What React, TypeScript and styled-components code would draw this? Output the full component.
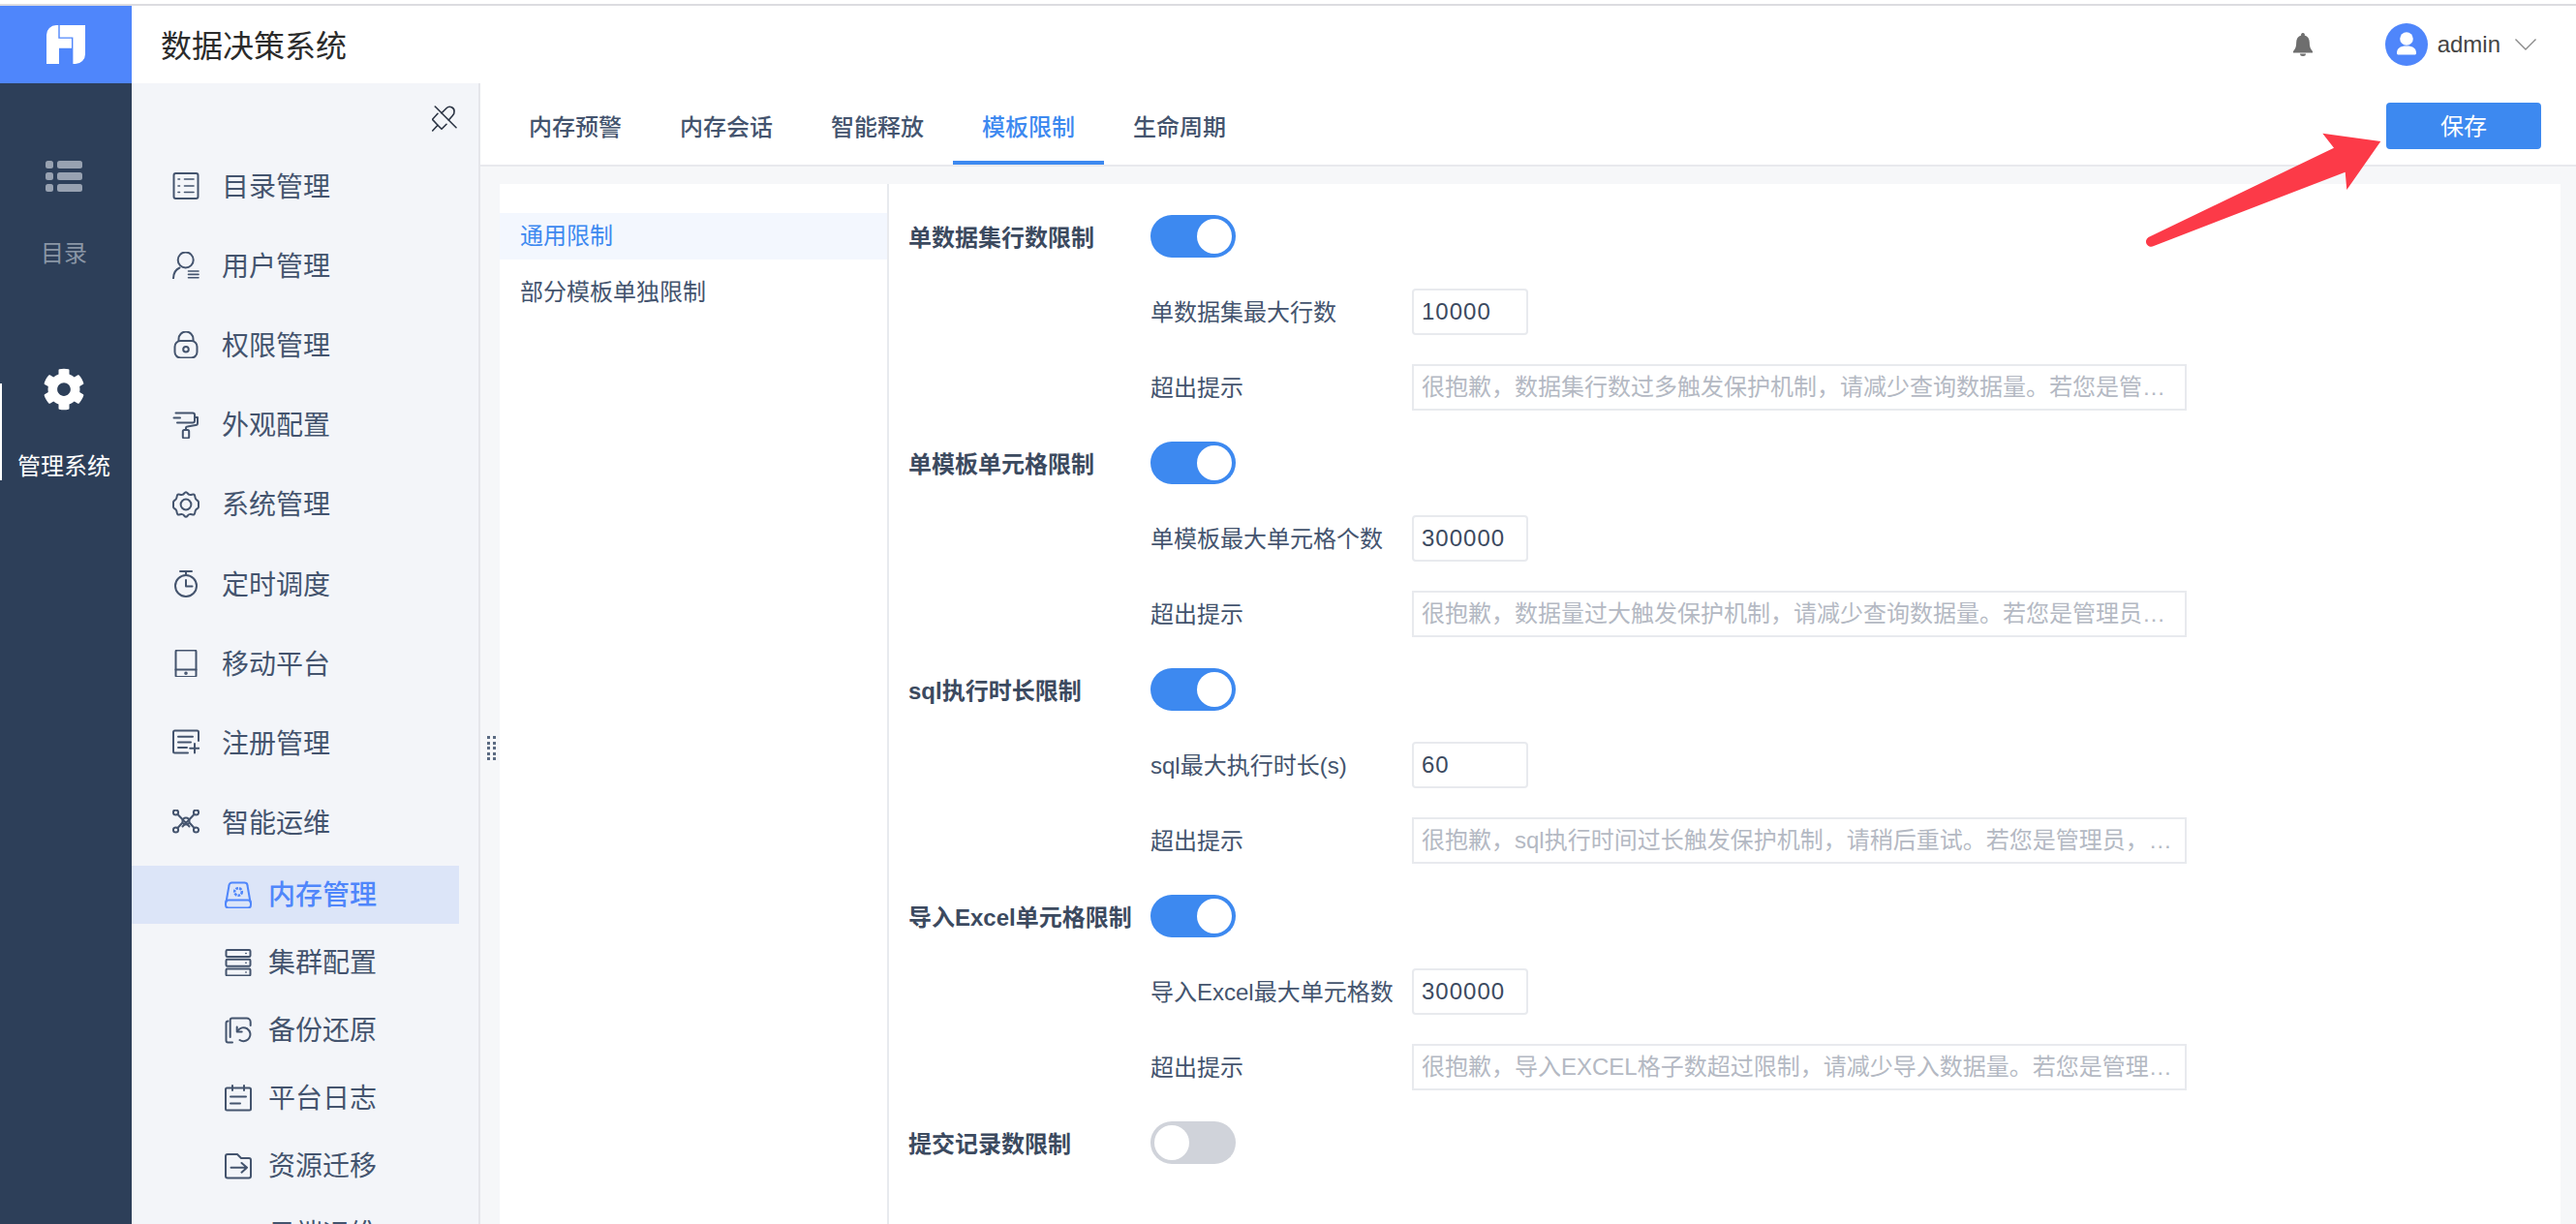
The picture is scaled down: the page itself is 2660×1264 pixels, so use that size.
import React from 'react';
import styled, { createGlobalStyle } from 'styled-components';
import { FaCog } from 'react-icons/fa';

const INK = '#44546e';
const BLUE = '#3d89f0';
const BRAND = '#4f86fb';

const GlobalStyle = createGlobalStyle`
  html, body {
    margin: 0;
    padding: 0;
    background: #fff;
  }
  body {
    font-family: "Liberation Sans", "Noto Sans CJK SC", sans-serif;
    font-size: 24px;
    overflow: hidden;
  }
  * {
    box-sizing: border-box;
  }
`;

const iconProps = {
  width: 28,
  height: 28,
  viewBox: '0 0 28 28',
  fill: 'none',
  stroke: 'currentColor',
  strokeWidth: 2,
  strokeLinecap: 'round' as const,
  strokeLinejoin: 'round' as const,
};

const CatalogIcon = () => (
  <svg {...iconProps}>
    <rect x="1.500" y="1" width="25" height="26" rx="2" />
    <path strokeWidth="1.600" d="M6 7h1.500M12.500 7H22M6 14h1.500M12.500 14H22M6 20.500h1.500M12.500 20.500H22" />
  </svg>
);

const UserIcon = () => (
  <svg {...iconProps}>
    <circle cx="13.700" cy="8.500" r="8" />
    <path d="M1 27.500c0-5 2.200-9 6.500-11" />
    <path strokeWidth="1.600" d="M16.500 20H27M16.500 23.400H27M16.500 26.800H27" />
  </svg>
);

const LockIcon = () => (
  <svg {...iconProps}>
    <path d="M6.500 10V8a7.500 7.500 0 0 1 15 0v2" />
    <rect x="2.500" y="10" width="23" height="17.500" rx="6" />
    <circle cx="14" cy="18.700" r="2.800" />
  </svg>
);

const RollerIcon = () => (
  <svg {...iconProps}>
    <path d="M3.500 1.500H21a2 2 0 0 1 2 2v6a2 2 0 0 1-2 2H5" />
    <path d="M1.500 6.500H8" />
    <path d="M23.500 6h2.500v6a2 2 0 0 1-2 2L15.500 15.500a1.500 1.500 0 0 0-1.500 1.500v2" />
    <rect x="10.800" y="19" width="6.400" height="8.500" rx="1.500" />
  </svg>
);

const GearLineIcon = () => (
  <svg {...iconProps}>
    <path d="M14 1.300c1.500 0 2 2.200 3.700 2.600 1.800.5 3.500-1 4.700-.2 1.200.8.700 3 1.700 4.500 1 1.500 2.900 1.700 2.900 3.400v4.800c0 1.700-1.900 1.900-2.900 3.400-1 1.500-.5 3.700-1.700 4.500-1.200.8-2.900-.7-4.700-.2-1.700.4-2.200 2.600-3.700 2.600s-2-2.200-3.700-2.600c-1.800-.5-3.500 1-4.700.2-1.200-.8-.7-3-1.700-4.500-1-1.500-2.900-1.700-2.900-3.400v-4.800c0-1.700 1.900-1.900 2.900-3.400 1-1.500.5-3.700 1.700-4.500 1.200-.8 2.900.7 4.700.2C12 3.500 12.500 1.300 14 1.300z" />
    <circle cx="14" cy="14" r="5.400" />
  </svg>
);

const TimerIcon = () => (
  <svg {...iconProps}>
    <path d="M8 1h12M14 1v4" />
    <circle cx="14" cy="16" r="11" />
    <path d="M14 10v6.500h6.500" />
  </svg>
);

const TabletIcon = () => (
  <svg {...iconProps}>
    <rect x="3.500" y="0.500" width="21" height="27.500" rx="1.500" />
    <path d="M3.500 20.500h21" />
    <circle cx="14" cy="24.300" r="0.800" />
  </svg>
);

const RegisterIcon = () => (
  <svg {...iconProps}>
    <path d="M27 12V3A1.500 1.500 0 0 0 25.500 1.500H2.500A1.500 1.500 0 0 0 1 3v20A1.500 1.500 0 0 0 2.500 24.500H16" />
    <path d="M6 7.800h15M6 13.500h13M6 19h9M23 15v9.500M18.200 19.700h9.300" />
  </svg>
);

const NodesIcon = () => (
  <svg {...iconProps} viewBox="0 0 28 28">
    <circle cx="14" cy="12" r="3.600" />
    <circle cx="3.500" cy="3" r="2.600" />
    <circle cx="24.500" cy="3" r="2.600" />
    <circle cx="3.500" cy="21" r="2.600" />
    <circle cx="24.500" cy="21" r="2.600" />
    <path d="M5.500 5l12 12.500M22.500 5l-12 12.500M5.500 19l4.500-5M22.500 19l-4.500-5" />
  </svg>
);

const DiskIcon = () => (
  <svg {...iconProps}>
    <path d="M1.500 21.500l3-17a3 3 0 0 1 3-3h13a3 3 0 0 1 3 3l3 17" />
    <rect x="1" y="19.500" width="26" height="8" rx="3" />
    <circle cx="14" cy="11" r="3.800" strokeWidth="2.600" strokeDasharray="2.600 1.100" strokeLinecap="butt" />
  </svg>
);

const ServerIcon = () => (
  <svg {...iconProps}>
    <rect x="1.500" y="1" width="25" height="7" rx="1.200" />
    <rect x="1.500" y="10.800" width="25" height="7" rx="1.200" />
    <rect x="1.500" y="20.500" width="25" height="7" rx="1.200" />
    <path strokeWidth="1.500" d="M21.800 4.500h.4M21.800 14.300h.4M21.800 24h.4" />
  </svg>
);

const RestoreIcon = () => (
  <svg {...iconProps}>
    <path d="M3.500 4.500a2 2 0 0 0-2 2v18a2 2 0 0 0 2 2H8" />
    <path d="M5.700 21V3.500a2 2 0 0 1 2-2h15a4 4 0 0 1 4 4V9" />
    <path d="M13.500 14.500a7 7 0 1 1 2 9.500" />
    <path d="M12.700 10.500v5h5" />
  </svg>
);

const LogIcon = () => (
  <svg {...iconProps}>
    <rect x="1" y="3.500" width="26" height="23" rx="1.500" />
    <path d="M8 1v5M20 1v5M6 12.500h16M6 19.500h10" />
  </svg>
);

const FolderIcon = () => (
  <svg {...iconProps}>
    <path d="M1 24.500V4a2 2 0 0 1 2-2h10l4 4h8a2 2 0 0 1 2 2v16.500a2 2 0 0 1-2 2H3a2 2 0 0 1-2-2z" />
    <path d="M6.500 15.700H23M17.500 11l5.500 4.700-5.500 5" />
  </svg>
);

const PinIcon = () => (
  <svg width="26" height="28" viewBox="0 0 26 28" fill="none" stroke="#2b3444" strokeWidth="1.600" strokeLinecap="round" strokeLinejoin="round">
    <path d="M3.300 2L25 23.700" />
    <path d="M10 8.700l5-5a4.700 4.700 0 0 1 8 4 4.700 4.700 0 0 1-1.500 3.500l-4.200 4.800" />
    <path d="M6 9.300L0.500 15.300l5.500 6 4 4 5-5" />
    <path d="M6 21.300l-5.300 5.700" />
  </svg>
);

const mainNav = [
  { label: '目录管理', icon: <CatalogIcon /> },
  { label: '用户管理', icon: <UserIcon /> },
  { label: '权限管理', icon: <LockIcon /> },
  { label: '外观配置', icon: <RollerIcon /> },
  { label: '系统管理', icon: <GearLineIcon /> },
  { label: '定时调度', icon: <TimerIcon /> },
  { label: '移动平台', icon: <TabletIcon /> },
  { label: '注册管理', icon: <RegisterIcon /> },
  { label: '智能运维', icon: <NodesIcon /> },
];

const subNav = [
  { label: '内存管理', icon: <DiskIcon />, active: true },
  { label: '集群配置', icon: <ServerIcon /> },
  { label: '备份还原', icon: <RestoreIcon /> },
  { label: '平台日志', icon: <LogIcon /> },
  { label: '资源迁移', icon: <FolderIcon /> },
  { label: '云端运维', icon: null },
];

const tabs = ['内存预警', '内存会话', '智能释放', '模板限制', '生命周期'];

const limits = [
  {
    title: '单数据集行数限制',
    maxLabel: '单数据集最大行数',
    max: '10000',
    hint: '很抱歉，数据集行数过多触发保护机制，请减少查询数据量。若您是管理员，请调整限制。',
  },
  {
    title: '单模板单元格限制',
    maxLabel: '单模板最大单元格个数',
    max: '300000',
    hint: '很抱歉，数据量过大触发保护机制，请减少查询数据量。若您是管理员，请调整限制。',
  },
  {
    title: 'sql执行时长限制',
    maxLabel: 'sql最大执行时长(s)',
    max: '60',
    hint: '很抱歉，sql执行时间过长触发保护机制，请稍后重试。若您是管理员，请调整限制。',
  },
  {
    title: '导入Excel单元格限制',
    maxLabel: '导入Excel最大单元格数',
    max: '300000',
    hint: '很抱歉，导入EXCEL格子数超过限制，请减少导入数据量。若您是管理员，请调整限制。',
  },
];

const App = () => (
  <Page>
    <GlobalStyle />
    <TopLine />
    <Header>
      <Logo>
        <svg width="40" height="40" viewBox="0 0 40 40" fill="#fff">
          <path d="M0 10A10 10 0 0 1 10 0h2.300v13.800H26v10H13V40H0z" />
          <path d="M13.700 0H40v30a10 10 0 0 1-10 10h-2.600V12.500H13.700z" />
        </svg>
      </Logo>
      <AppTitle>数据决策系统</AppTitle>
      <HeaderRight>
        <svg width="20" height="24" viewBox="0 0 20 24" fill="#6e6e6e">
          <path d="M10 0a1.800 1.800 0 0 1 1.800 2.400C15 3.200 16.800 6 16.800 9.500c0 4.500.8 7 3.200 9.500v1.500H0V19c2.400-2.500 3.200-5 3.200-9.500C3.200 6 5 3.200 8.200 2.400A1.800 1.800 0 0 1 10 0z" />
          <path d="M7 21.500h6a3 2.500 0 0 1-6 0z" />
        </svg>
        <UserBox>
          <Avatar>
            <svg width="44" height="44" viewBox="0 0 44 44" fill="#fff">
              <circle cx="22" cy="16" r="6.800" />
              <path d="M12 31c0-5 3-7.500 10-7.500s10 2.500 10 7.500c0 1-1 1.500-2 1.500H14c-1 0-2-.5-2-1.500z" />
            </svg>
          </Avatar>
          <UserName>admin</UserName>
          <svg width="22" height="12" viewBox="0 0 22 12" fill="none" stroke="#8a8a8a" strokeWidth="1.400">
            <path d="M.5.500 11 11 21.500.500" />
          </svg>
        </UserBox>
      </HeaderRight>
    </Header>
    <Body>
      <Rail>
        <RailItem>
          <RailIcon>
            <svg width="38" height="32" viewBox="0 0 38 32" fill="#98a2b1">
              <rect width="8" height="8" rx="2.500" />
              <rect x="12" width="26" height="8" rx="2.500" />
              <rect y="12" width="8" height="8" rx="2.500" />
              <rect x="12" y="12" width="26" height="8" rx="2.500" />
              <rect y="24" width="8" height="8" rx="2.500" />
              <rect x="12" y="24" width="26" height="8" rx="2.500" />
            </svg>
          </RailIcon>
          <RailLabel>目录</RailLabel>
        </RailItem>
        <RailItem $active>
          <RailIcon>
            <FaCog size={44} />
          </RailIcon>
          <RailLabel>管理系统</RailLabel>
        </RailItem>
      </Rail>
      <SideNav>
        <PinRow>
          <PinIcon />
        </PinRow>
        {mainNav.map((item) => (
          <NavItem key={item.label}>
            <NavIcon>{item.icon}</NavIcon>
            <NavLabel>{item.label}</NavLabel>
          </NavItem>
        ))}
        <SubList>
          {subNav.map((item) => (
            <SubItem key={item.label} $active={item.active}>
              <NavIcon>{item.icon}</NavIcon>
              <NavLabel>{item.label}</NavLabel>
            </SubItem>
          ))}
        </SubList>
      </SideNav>
      <Main>
        <TabBar>
          {tabs.map((tab) => (
            <Tab key={tab} $active={tab === '模板限制'}>
              {tab}
            </Tab>
          ))}
          <SaveButton type="button">保存</SaveButton>
          <Arrow width="248" height="124" viewBox="2214 134 248 124">
            <path
              d="M2218.500 245 2410 152.700 2398.300 137.700 2458.300 146 2423.300 196 2421.700 177.700 2224 254a4.500 4.500 0 0 1-5.500-9z"
              fill="#fc3a48"
            />
          </Arrow>
        </TabBar>
        <Content>
          <Grip>
            {Array.from({ length: 10 }, (_, i) => (
              <GripDot key={i} />
            ))}
          </Grip>
          <Panel>
            <SideMenu>
              <SideMenuItem $active>通用限制</SideMenuItem>
              <SideMenuItem>部分模板单独限制</SideMenuItem>
            </SideMenu>
            <Form>
              {limits.map((limit) => (
                <React.Fragment key={limit.title}>
                  <FormRow>
                    <SectionTitle>{limit.title}</SectionTitle>
                    <Toggle $on>
                      <Knob />
                    </Toggle>
                  </FormRow>
                  <FormRow $sub>
                    <FieldLabel>{limit.maxLabel}</FieldLabel>
                    <NumberBox>{limit.max}</NumberBox>
                  </FormRow>
                  <FormRow $sub>
                    <FieldLabel>超出提示</FieldLabel>
                    <HintBox>{limit.hint}</HintBox>
                  </FormRow>
                </React.Fragment>
              ))}
              <FormRow>
                <SectionTitle>提交记录数限制</SectionTitle>
                <Toggle>
                  <Knob />
                </Toggle>
              </FormRow>
            </Form>
          </Panel>
        </Content>
      </Main>
    </Body>
  </Page>
);

const Page = styled.div`
  display: flex;
  flex-direction: column;
  height: 1264px;
  overflow: hidden;
  background: #fff;
`;

const TopLine = styled.div`
  height: 6px;
  flex: none;
  background: #fff;
  border-bottom: 2px solid #dcdce0;
`;

const Header = styled.header`
  display: flex;
  align-items: center;
  height: 80px;
  flex: none;
  background: #fff;
`;

const Logo = styled.div`
  display: flex;
  align-items: center;
  justify-content: center;
  width: 136px;
  height: 100%;
  background: ${BRAND};
`;

const AppTitle = styled.div`
  margin-left: 30px;
  padding-bottom: 3px;
  font-size: 32px;
  color: #2b2b2b;
`;

const HeaderRight = styled.div`
  display: flex;
  align-items: center;
  margin-left: auto;
  padding-right: 41px;
  gap: 75px;
`;

const UserBox = styled.div`
  display: flex;
  align-items: center;
`;

const Avatar = styled.div`
  display: flex;
  width: 44px;
  height: 44px;
  border-radius: 50%;
  background: ${BRAND};
`;

const UserName = styled.span`
  margin: 0 15px 0 10px;
  font-size: 24px;
  color: #444;
`;

const Body = styled.div`
  display: flex;
  flex: 1;
  min-height: 0;
`;

const Rail = styled.nav`
  display: flex;
  flex-direction: column;
  gap: 104px;
  flex: none;
  width: 136px;
  padding-top: 76px;
  background: #2d3f59;
`;

const RailItem = styled.div<{ $active?: boolean }>`
  position: relative;
  display: flex;
  flex-direction: column;
  align-items: center;
  height: 116px;
  padding-right: 4px;
  color: ${({ $active }) => ($active ? '#fff' : '#8a96a6')};

  &::before {
    content: '';
    display: ${({ $active }) => ($active ? 'block' : 'none')};
    position: absolute;
    left: 0;
    top: 14px;
    width: 2px;
    height: 100px;
    background: #fff;
  }
`;

const RailIcon = styled.div`
  display: flex;
  align-items: center;
  justify-content: center;
  height: 40px;
`;

const RailLabel = styled.div`
  margin-top: 44px;
  line-height: 32px;
  font-size: 24px;
`;

const SideNav = styled.nav`
  flex: none;
  width: 360px;
  background: #f3f5f9;
  border-right: 2px solid #e5e6eb;
  overflow: hidden;
`;

const PinRow = styled.div`
  display: flex;
  justify-content: flex-end;
  height: 65px;
  padding: 22px 22px 0 0;
`;

const NavItem = styled.div`
  display: flex;
  align-items: center;
  gap: 23px;
  height: 82.2px;
  padding-left: 42px;
  font-size: 28px;
  color: ${INK};
`;

const NavIcon = styled.span`
  display: flex;
  flex: none;
  width: 28px;
  height: 28px;
`;

const NavLabel = styled.span`
  padding-bottom: 3px;
`;

const SubList = styled.div`
  display: flex;
  flex-direction: column;
  gap: 10px;
  margin-top: 3px;
`;

const SubItem = styled.div<{ $active?: boolean }>`
  display: flex;
  align-items: center;
  gap: 17px;
  flex: none;
  width: 338px;
  height: 60px;
  padding-left: 96px;
  font-size: 28px;
  font-weight: ${({ $active }) => ($active ? 500 : 400)};
  color: ${({ $active }) => ($active ? BRAND : INK)};
  background: ${({ $active }) => ($active ? '#dce5f8' : 'transparent')};
`;

const Main = styled.main`
  display: flex;
  flex-direction: column;
  flex: 1;
  min-width: 0;
`;

const TabBar = styled.div`
  position: relative;
  display: flex;
  flex: none;
  height: 86px;
  padding: 0 36px 0 20px;
  background: #fff;
  border-bottom: 2px solid #e8e9ed;
`;

const Tab = styled.div<{ $active?: boolean }>`
  display: flex;
  align-items: center;
  padding: 7px 30px 0;
  font-size: 24px;
  font-weight: 500;
  color: ${({ $active }) => ($active ? BLUE : '#44546e')};
  border-bottom: 4px solid ${({ $active }) => ($active ? BLUE : 'transparent')};
`;

const SaveButton = styled.button`
  align-self: flex-start;
  width: 160px;
  height: 48px;
  margin: 20px 0 0 auto;
  padding: 0 0 3px;
  border: none;
  border-radius: 4px;
  background: ${BLUE};
  color: #fff;
  font: inherit;
  font-size: 24px;
`;

const Arrow = styled.svg`
  position: absolute;
  left: 1718px;
  top: 48px;
  z-index: 2;
`;

const Content = styled.div`
  position: relative;
  display: flex;
  flex: 1;
  min-height: 0;
  padding: 18px 16px 0 20px;
  background: #f6f7f9;
`;

const Grip = styled.div`
  position: absolute;
  left: 7px;
  top: 588px;
  display: grid;
  grid-template-columns: 3px 3px;
  gap: 2.500px 3px;
`;

const GripDot = styled.span`
  width: 3px;
  height: 3px;
  background: #5a6a82;
`;

const Panel = styled.div`
  display: flex;
  flex: 1;
  min-width: 0;
  background: #fff;
`;

const SideMenu = styled.div`
  display: flex;
  flex-direction: column;
  gap: 10px;
  flex: none;
  width: 402px;
  padding-top: 30px;
  border-right: 2px solid #e8eaee;
`;

const SideMenuItem = styled.div<{ $active?: boolean }>`
  display: flex;
  align-items: center;
  height: 48px;
  padding: 0 0 5px 21px;
  font-size: 24px;
  color: ${({ $active }) => ($active ? BLUE : '#44546e')};
  background: ${({ $active }) => ($active ? '#f3f7fe' : 'transparent')};
`;

const Form = styled.div`
  flex: 1;
  min-width: 0;
  padding: 15px 0 0 20px;
`;

const FormRow = styled.div<{ $sub?: boolean }>`
  display: flex;
  align-items: center;
  height: 78px;
  padding-left: ${({ $sub }) => ($sub ? '250px' : '0')};
`;

const SectionTitle = styled.div`
  flex: none;
  width: 250px;
  padding-bottom: 2px;
  font-size: 24px;
  font-weight: 600;
  color: #3c4a5f;
`;

const Toggle = styled.div<{ $on?: boolean }>`
  display: flex;
  justify-content: ${({ $on }) => ($on ? 'flex-end' : 'flex-start')};
  width: 88px;
  height: 44px;
  padding: 4px;
  border-radius: 22px;
  background: ${({ $on }) => ($on ? BLUE : '#d0d3da')};
`;

const Knob = styled.span`
  width: 36px;
  height: 36px;
  border-radius: 50%;
  background: #fff;
`;

const FieldLabel = styled.div`
  flex: none;
  width: 270px;
  padding-bottom: 4px;
  font-size: 24px;
  color: #44546e;
`;

const NumberBox = styled.div`
  width: 120px;
  height: 48px;
  padding: 0 8px;
  line-height: 44px;
  font-size: 24px;
  letter-spacing: 1px;
  color: #3c4a5f;
  border: 2px solid #e8eaee;
  border-radius: 4px;
`;

const HintBox = styled.div`
  width: 800px;
  height: 48px;
  padding: 0 8px;
  line-height: 43px;
  font-size: 24px;
  color: #b4b9c3;
  border: 2px solid #e8eaee;
  white-space: nowrap;
  overflow: hidden;
  text-overflow: ellipsis;
`;

export default App;
